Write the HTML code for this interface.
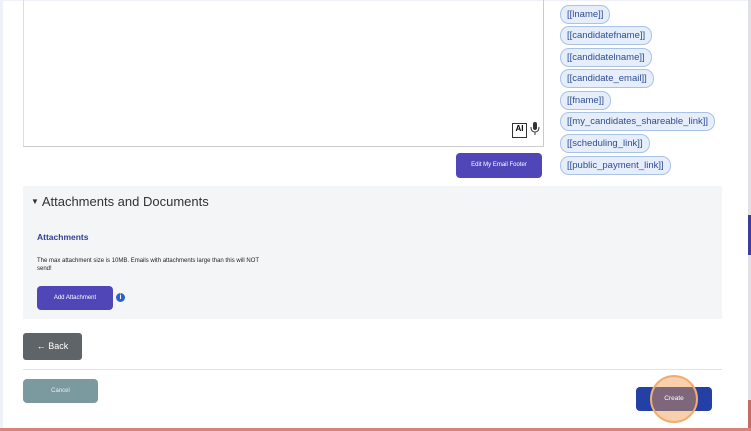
<!DOCTYPE html>
<html><head><style>
body{margin:0;width:751px;height:431px;overflow:hidden;background:#fff;font-family:"Liberation Sans",sans-serif;position:relative}
.a{position:absolute}
.chip{position:absolute;left:560px;height:17px;border:1px solid #a9c3e6;background:#e5eefa;border-radius:9px;color:#2f4c95;font-size:9.5px;line-height:17px;padding:0 6px;white-space:nowrap}
</style></head><body>
<div class="a" style="left:0;top:0;width:3px;height:431px;background:#eef2f8"></div>
<div class="a" style="left:3px;top:0;width:745px;height:1px;background:#eef2f8"></div>
<div class="a" style="left:748px;top:0;width:3px;height:431px;background:#dfe1e4"></div>
<div class="a" style="left:748px;top:215px;width:3px;height:40px;background:#3b3ba0"></div>
<div class="a" style="left:748px;top:400px;width:3px;height:31px;background:#c86b5f"></div>
<div class="a" style="left:0;top:428px;width:751px;height:3px;background:#d9847a"></div>
<div class="a" style="left:23px;top:0;width:519px;height:146px;border-left:1px solid #ddd;border-bottom:1px solid #ccc;border-right:1px solid #ccc"></div>
<div class="a" style="left:512px;top:123px;width:13px;height:13px;border:1px solid #333;font-size:8px;font-weight:bold;line-height:10px;text-align:center">AI</div>
<svg class="a" style="left:530px;top:121px" width="10" height="16"><rect x="3" y="1" width="4" height="8" rx="2" fill="#333"/><path d="M1 6 Q1 11 5 11 Q9 11 9 6 M5 11V14" stroke="#333" fill="none"/></svg>
<div class="a" style="left:456px;top:153px;width:86px;height:25px;background:#5146b8;border-radius:4px;color:#fff;font-size:6px;line-height:25px;text-align:center">Edit My Email Footer</div>
<div class="chip" style="top:5px">[[lname]]</div>
<div class="chip" style="top:26px">[[candidatefname]]</div>
<div class="chip" style="top:48px">[[candidatelname]]</div>
<div class="chip" style="top:69px">[[candidate_email]]</div>
<div class="chip" style="top:91px">[[fname]]</div>
<div class="chip" style="top:112px">[[my_candidates_shareable_link]]</div>
<div class="chip" style="top:134px">[[scheduling_link]]</div>
<div class="chip" style="top:156px">[[public_payment_link]]</div>
<div class="a" style="left:23px;top:186px;width:699px;height:133px;background:#f4f5f7"></div>
<div class="a" style="left:31px;top:194px;font-size:13px;color:#333"><span style="font-size:8px;vertical-align:2px">▼</span> Attachments and Documents</div>
<div class="a" style="left:37px;top:232px;font-size:8.5px;font-weight:bold;color:#2f3f8f">Attachments</div>
<div class="a" style="left:37px;top:257px;font-size:6px;line-height:8px;color:#222;width:230px">The max attachment size is 10MB. Emails with attachments large than this will NOT send!</div>
<div class="a" style="left:37px;top:286px;width:76px;height:24px;background:#5146b8;border-radius:4px;color:#fff;font-size:6px;line-height:24px;text-align:center">Add Attachment</div>
<div class="a" style="left:116px;top:293px;width:9px;height:9px;border-radius:50%;background:#2a62c9;color:#fff;font-size:7px;line-height:9px;text-align:center;font-weight:bold">i</div>
<div class="a" style="left:23px;top:333px;width:59px;height:27px;background:#5f6468;border-radius:3px;color:#fff;font-size:9px;line-height:27px;text-align:center">← Back</div>
<div class="a" style="left:23px;top:369px;width:699px;height:1px;background:#e2e2e2"></div>
<div class="a" style="left:23px;top:379px;width:75px;height:24px;background:#7b9aa0;border-radius:4px;color:#e8eef0;font-size:6px;line-height:24px;text-align:center">Cancel</div>
<div class="a" style="left:636px;top:387px;width:76px;height:24px;background:#2440a6;border-radius:4px"></div>
<div class="a" style="left:650px;top:375px;width:44px;height:44px;border-radius:50%;background:rgba(240,150,70,0.45);border:2px solid #f0ae6e"></div>
<div class="a" style="left:652px;top:377px;width:44px;height:44px;border-radius:50%;color:#fff;font-size:6.5px;line-height:44px;text-align:center">Create</div>
</body></html>
